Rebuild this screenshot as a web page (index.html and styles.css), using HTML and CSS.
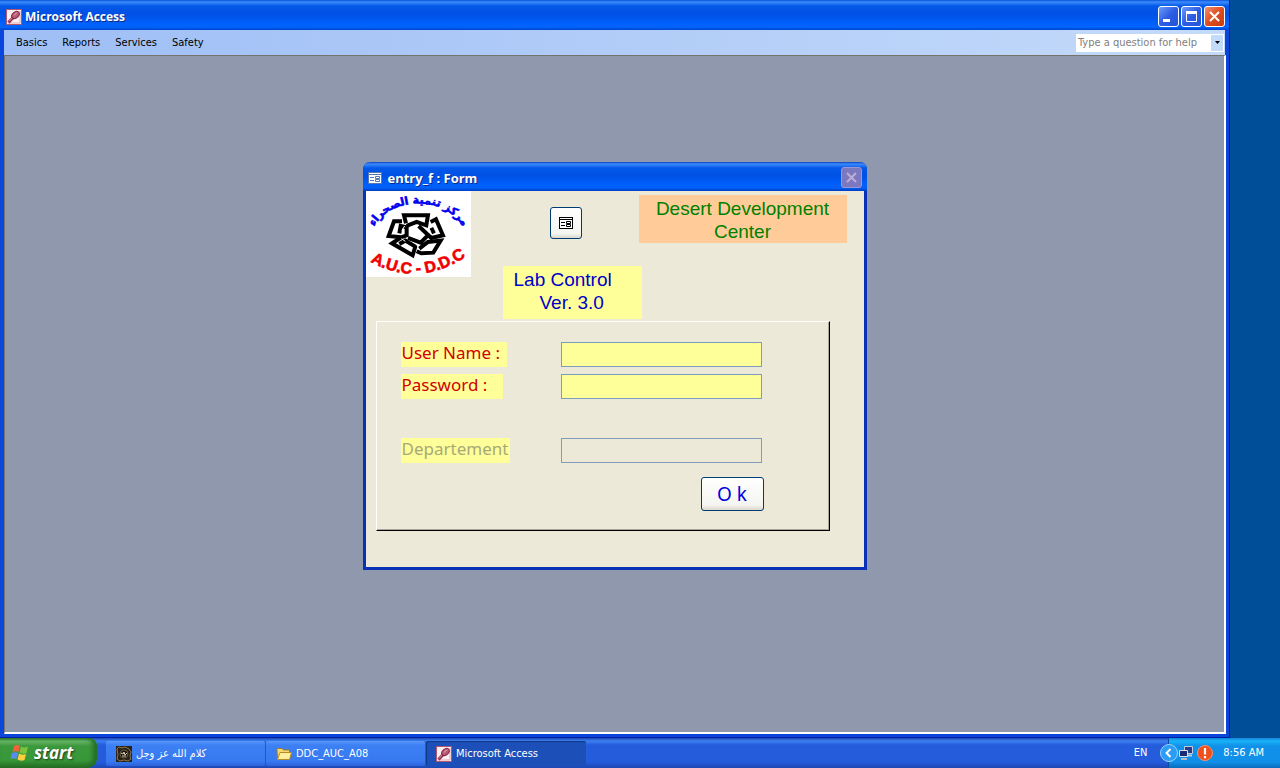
FILE: index.html
```html
<!DOCTYPE html>
<html lang="en">
<head>
<meta charset="utf-8">
<title>Microsoft Access</title>
<link rel="stylesheet" href="styles.css">
</head>
<body>
<svg width="0" height="0" class="defs" aria-hidden="true">
  <symbol id="access" viewBox="0 0 16 16">
    <rect x="0.5" y="0.5" width="15" height="15" fill="#fdeef0" stroke="#b05870"/>
    <path d="M14 2v12H2" fill="none" stroke="#e6a9b5"/>
    <path d="M2.500 13.500l5.500-6" stroke="#8c2848" stroke-width="3"/>
    <path d="M3 12.500l5-5.500" stroke="#e0a0b0" stroke-width="1"/>
    <ellipse cx="9.500" cy="6" rx="4.200" ry="3" transform="rotate(-42 9.500 6)" fill="#b85c74" stroke="#842444"/>
    <path d="M8 6.500l3-3" stroke="#e8b4c0"/>
  </symbol>
  <symbol id="form" viewBox="0 0 14 12">
    <rect x="0.5" y="0.5" width="13" height="11" fill="#fff" stroke="currentColor"/>
    <path d="M1 2.500h12" stroke="currentColor"/>
    <path d="M2 5.500h4M2 8.500h4" stroke="currentColor"/>
    <path d="M7.500 4.500h4v2h-4zM7.500 7.500h4v2h-4z" fill="none" stroke="currentColor"/>
  </symbol>
</svg>

<main class="desktop">
  <section class="app">
    <header class="titlebar">
      <svg class="icon16"><use href="#access"/></svg>
      <h1 class="title">Microsoft Access</h1>
      <button class="winbtn" type="button" aria-label="Minimize"><svg viewBox="0 0 19 19"><path d="M4 13.500h7" stroke="#fff" stroke-width="3"/></svg></button>
      <button class="winbtn" type="button" aria-label="Maximize"><svg viewBox="0 0 19 19"><path d="M4.500 5v9.500h10V5" fill="none" stroke="#fff"/><path d="M4 5.500h11" stroke="#fff" stroke-width="3"/></svg></button>
      <button class="winbtn close" type="button" aria-label="Close"><svg viewBox="0 0 19 19"><path d="M5 5l9 9M14 5l-9 9" stroke="#fff" stroke-width="2"/></svg></button>
    </header>
    <nav class="menubar">
      <button type="button">Basics</button>
      <button type="button">Reports</button>
      <button type="button">Services</button>
      <button type="button">Safety</button>
      <div class="help">
        <input type="text" placeholder="Type a question for help" aria-label="Type a question for help">
        <button type="button" class="drop" aria-label="Show questions"><svg viewBox="0 0 7 4"><path d="M1 0h5L3.500 3z" fill="#000"/></svg></button>
      </div>
    </nav>
    <div class="mdi">
      <form class="dialog">
        <div class="dialog-title">
          <svg class="form-icon"><use href="#form"/></svg>
          <h2>entry_f : Form</h2>
          <button class="winbtn off" type="button" aria-label="Close form" disabled><svg viewBox="0 0 19 19"><path d="M5 5l9 9M14 5l-9 9" stroke="#bcaed8" stroke-width="2"/></svg></button>
        </div>
        <div class="dialog-body">
          <div class="head">
            <svg class="logo" viewBox="0 0 105 86" role="img" aria-label="A.U.C - D.D.C">
              <defs>
                <path id="arcTop" d="M6 41C19 4 84 2 99 41"/>
                <path id="arcBottom" d="M3 70Q52 98 101 65"/>
              </defs>
              <text class="logo-ar" direction="rtl"><textPath href="#arcTop" startOffset="50%" text-anchor="middle">مركز تنمية الصحراء</textPath></text>
              <g transform="translate(20 15) scale(0.333)" fill="none" stroke="#000" stroke-width="12">
                <path d="M60 52L54 28H126L121 58L92 48L62 60"/>
                <path d="M48 46H24L8 90L46 94L62 88V64L44 60L40 82"/>
                <path d="M134 48L150 40L171 88L136 96L98 60M136 66L144 82"/>
                <path d="M46 94L18 112L80 148L88 122L58 104L40 114"/>
                <path d="M66 96L104 110L128 86M92 136L106 142L142 140L164 104L126 108L100 128"/>
                <path d="M56 60L48 74M124 66L134 76M92 114L96 124M46 98L58 106" stroke="#fff" stroke-width="3"/>
              </g>
              <text class="logo-en"><textPath href="#arcBottom" startOffset="50%" text-anchor="middle">A.U.C - D.D.C</textPath></text>
            </svg>
            <button class="xp formbtn" type="button" aria-label="Open form"><svg class="form-icon"><use href="#form"/></svg></button>
            <p class="org">Desert Development<br>Center</p>
          </div>
          <p class="version"><span>Lab Control</span><span class="ver">Ver. 3.0</span></p>
          <div class="panel">
            <label for="user" class="red user">User Name :</label>
            <input id="user" type="text">
            <label for="pass" class="red pass">Password :</label>
            <input id="pass" type="password">
            <label for="dept" class="dept">Departement</label>
            <input id="dept" class="dept-in" type="text" disabled>
            <button class="xp ok" type="submit">O k</button>
          </div>
        </div>
      </form>
    </div>
  </section>
</main>

<footer class="taskbar">
  <button class="start" type="button">
    <svg viewBox="0 0 20 18">
      <path d="M4 2Q7 0 10 2L8.500 8Q5.500 6.500 2.500 8Z" fill="#f0643c"/>
      <path d="M11 2.500Q14 4.500 18 2.500L16.500 9Q13 10.500 9.500 8.500Z" fill="#7cc43c"/>
      <path d="M2 9Q5 7.500 8 9L6.500 15Q3.500 13.500 0.500 15Z" fill="#5a8cf0"/>
      <path d="M9 9.500Q12.500 11.500 16 10L14.500 16Q11 17.500 7.500 15.500Z" fill="#fcd03c"/>
    </svg>
    start
  </button>
  <div class="tasks">
    <button class="task" type="button">
      <svg class="icon16" viewBox="0 0 16 16"><rect width="16" height="16" fill="#2a2218"/><path d="M1 3l2-2 3 1 3-1 4 2 2 3-1 4 1 3-3 2-4-1-4 1-3-2 1-4z" fill="none" stroke="#8c7850"/><circle cx="8" cy="8" r="4" fill="#171410" stroke="#6c5c3c"/><path d="M5 7l2 1 1-2 1 3 2-2M6 10h4" fill="none" stroke="#e0d8b8"/></svg>
      <span lang="ar" dir="rtl">كلام الله عز وجل</span>
    </button>
    <button class="task" type="button">
      <svg class="icon16" viewBox="0 0 16 16"><path d="M1 3.500l1-1h4l1.500 1.500h6V13H1.500z" fill="#f8d870" stroke="#a87c18"/><path d="M1.500 13.500L4 6.500h11.500L13.500 13.500z" fill="#fff0a0" stroke="#b88c20"/></svg>
      <span>DDC_AUC_A08</span>
    </button>
    <button class="task active" type="button">
      <svg class="icon16"><use href="#access"/></svg>
      <span>Microsoft Access</span>
    </button>
  </div>
  <span class="lang">EN</span>
  <div class="tray">
    <button class="chevron" type="button" aria-label="Show hidden icons"><svg viewBox="0 0 18 18"><circle cx="9" cy="9" r="8.500" fill="#2c9cf4" stroke="#9cd4fc"/><path d="M10.500 5L6.500 9l4 4" fill="none" stroke="#fff" stroke-width="2"/></svg></button>
    <svg class="icon16" viewBox="0 0 16 16"><path d="M6.500 1.500h8v7h-8z" fill="#283c8c" stroke="#c4ccdc"/><path d="M9 10.500h5" stroke="#c4ccdc" stroke-width="2"/><path d="M1.500 5.500h8v6h-8z" fill="#1c2c78" stroke="#dce0e8"/><path d="M3 14h6" stroke="#b4bccc" stroke-width="2"/></svg>
    <svg class="icon16" viewBox="0 0 16 16"><circle cx="8" cy="8" r="7.500" fill="#f0501c" stroke="#f8906c"/><path d="M8 3v6.500M8 11v2.200" stroke="#fff" stroke-width="2.200"/></svg>
    <time>8:56 AM</time>
  </div>
</footer>
</body>
</html>
```
FILE: styles.css
```css
* { box-sizing: border-box; }

body {
  margin: 0;
  min-height: 100vh;
  display: flex;
  flex-direction: column;
  background: #004e98;
  font: 11px/14px "DejaVu Sans Condensed", "Noto Sans", sans-serif;
  color: #000;
}

h1, h2, p { margin: 0; font-weight: normal; }
button, input { font: inherit; color: inherit; margin: 0; }
button { padding: 0; border: 0; background: none; white-space: nowrap; }
svg { display: block; flex: none; }
.defs { position: absolute; }
.icon16 { width: 16px; height: 16px; }
.form-icon { width: 14px; height: 12px; }

.desktop { flex: 1; display: flex; padding-right: 50px; }

.app {
  flex: 1;
  display: flex;
  flex-direction: column;
  background: #0a46dc;
  border-right: 1px solid #001ea0;
  border-bottom: 1px solid #001ea0;
}

.titlebar {
  height: 30px;
  display: flex;
  align-items: center;
  gap: 2px;
  padding: 3px 4px 0 6px;
  background: linear-gradient(#0a52dc 0, #3c8cfc 2px, #0458e8 6px, #0050e4 14px, #0060fc 23px, #0064fc 27px, #0044cc 30px);
}

.title, .dialog-title h2 {
  flex: 1;
  color: #fff;
  font: bold 13px/16px "Open Sans", sans-serif;
  text-shadow: 1px 1px #0a2a88;
}
.title { padding-left: 1px; font-size: 12px; }

.winbtn {
  width: 21px;
  height: 21px;
  border: 1px solid #fff;
  border-radius: 3px;
  background: linear-gradient(135deg, #6c9cf8, #2c5ce4 50%, #2454d4);
}
.winbtn.close { background: linear-gradient(135deg, #f09070, #e04c20 50%, #c83c10); }
.winbtn.off { background: #7c78c0; border-color: #9a98d4; }

.menubar {
  height: 25px;
  display: flex;
  align-items: center;
  gap: 15px;
  margin: 0 4px;
  padding: 0 1px 0 12px;
  background: linear-gradient(90deg, #9ebef5, #c4dafa);
}

.help {
  display: flex;
  width: 148px;
  height: 18px;
  margin-left: auto;
  background: #fff;
}
.help input { flex: 1; min-width: 0; padding: 0 2px; border: 0; background: none; }
.help input::placeholder { color: #808080; opacity: 1; }
.drop { width: 12px; margin: 1px; background: #c4dafa; display: grid; place-items: center; }
.drop svg { width: 7px; height: 4px; }

.mdi {
  flex: 1;
  display: flex;
  justify-content: center;
  align-items: flex-start;
  margin: 0 3px 3px 4px;
  padding: 106px 0 24px;
  background: #9098ae;
  border: 1px solid #74746c;
  border-right: 2px solid #fff;
  border-bottom: 2px solid #fff;
}

.dialog {
  width: 504px;
  border: 3px solid #0831b8;
  border-width: 0 3px 3px;
  border-radius: 7px 7px 0 0;
  background: #ece9d8;
}

.dialog-title {
  height: 29px;
  display: flex;
  align-items: center;
  gap: 6px;
  margin: 0 -3px;
  padding: 2px 5px 0;
  border-radius: 7px 7px 0 0;
  background: linear-gradient(#0a40c0 0, #3c8cfc 2px, #0458e8 6px, #0050e4 14px, #0060fc 22px, #0060f8 26px, #003cc0 29px);
  color: #5478b0;
}

.dialog-body { padding-bottom: 36px; }

.head { display: flex; align-items: flex-start; justify-content: space-between; padding-right: 17px; height: 75px; }
.logo { width: 105px; height: 86px; background: #fff; }
.logo-ar { font: bold 11px "DejaVu Sans", sans-serif; fill: #0000f0; stroke: #0000f0; stroke-width: 0.6px; }
.logo-en { font: bold 16px "Liberation Sans", sans-serif; fill: #f00000; stroke: #f00000; stroke-width: 0.6px; }

.xp {
  border: 1px solid #003c74;
  border-radius: 3px;
  background: linear-gradient(#fff, #f4f4f0 85%, #dcd8cc);
}
.formbtn { display: grid; place-items: center; width: 32px; height: 32px; margin: 16px 0 0 22px; }
.formbtn .form-icon { color: #000; }

.org, .version { font: 19px/23px "Liberation Sans", sans-serif; }
.org { width: 208px; height: 48px; margin-top: 4px; padding-top: 2px; text-align: center; background: #ffcc99; color: #008000; }

.version {
  display: flex;
  flex-direction: column;
  width: 139px;
  height: 53px;
  margin-left: 137px;
  padding: 2px 11px;
  background: #ffff99;
  color: #0000c8;
}
.ver { padding-left: 26px; }

.panel {
  display: grid;
  grid-template-columns: 160px 201px;
  row-gap: 7px;
  align-items: start;
  margin: 2px 34px 0 10px;
  padding: 20px 24px 19px;
  border: 1px solid #fff;
  border-right-color: #000;
  border-bottom-color: #000;
  box-shadow: inset -1px -1px #aca899;
}
.panel label {
  justify-self: start;
  height: 25px;
  padding-left: 1px;
  background: #ffff99;
  font: 17px/21px "Noto Sans", sans-serif;
}
.panel .red { color: #d00000; }
.panel .user { width: 106px; }
.panel .pass { width: 102px; }
.panel .dept { width: 109px; overflow: hidden; color: #a8a878; }
.panel input {
  width: 100%;
  height: 25px;
  border: 1px solid #7f9db9;
  background: #ffff99;
  font-size: 17px;
}
.panel .dept, .panel .dept-in { margin-top: 32px; }
.panel .dept-in { background: #ece9d8; }
.panel .ok {
  grid-column: 2;
  justify-self: end;
  width: 63px;
  height: 34px;
  margin: 7px -2px 0 0;
  font: 19px/30px "Noto Sans", sans-serif;
  color: #0000e0;
}

.taskbar {
  height: 30px;
  display: flex;
  align-items: stretch;
  color: #fff;
  background: linear-gradient(#1c48b8 0, #3c80f0 3px, #245cdc 7px, #245cdc 24px, #1c48b0 30px);
}

.start {
  display: flex;
  align-items: center;
  gap: 4px;
  width: 97px;
  padding: 0 0 1px 10px;
  border-radius: 0 8px 10px 0;
  background: linear-gradient(#2c7c2c 0, #6cb86c 3px, #3c983c 8px, #389838 22px, #246c24 30px);
  box-shadow: inset -4px 0 5px #246c24;
  font: italic bold 17px/24px "Open Sans", sans-serif;
  text-shadow: 1px 1px 2px #1c3c1c;
}
.start svg { width: 20px; height: 18px; }

.tasks { flex: 1; display: flex; padding: 3px 0 2px 9px; }
.task {
  flex: 0 1 160px;
  display: flex;
  align-items: center;
  gap: 4px;
  padding: 0 10px;
  border-radius: 2px;
  background: linear-gradient(#5c98fc 0, #3c80f4 4px, #3878f0 20px, #2c64dc);
  box-shadow: inset -1px 0 #2456c8;
}
.task.active { background: #1c50b8; box-shadow: inset 1px 1px 1px #103888; }

.lang { align-self: center; padding-right: 21px; }
.tray {
  display: flex;
  align-items: center;
  gap: 3px;
  padding-right: 16px;
  background: linear-gradient(#1484d8 0, #18b4f8 3px, #1090e8 8px, #1090e8 24px, #0c6cbc 30px);
  border-left: 1px solid #0c4c9c;
}
.chevron { width: 18px; height: 18px; margin-left: -9px; margin-right: -3px; }
.tray time { padding-left: 7px; }
```
